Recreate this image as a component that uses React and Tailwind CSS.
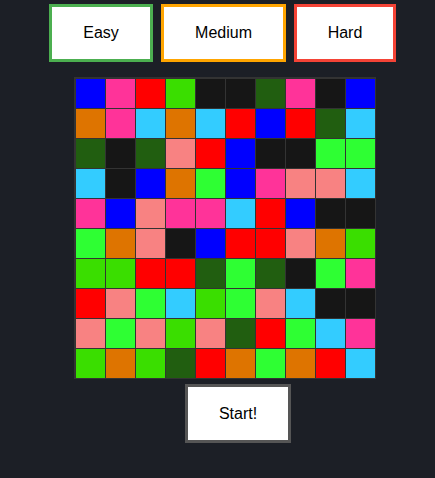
import React, { useState } from 'react';

const COLORS = {
  B: 'bg-[#0000ff]',
  P: 'bg-[#ff3399]',
  R: 'bg-[#ff0000]',
  L: 'bg-[#3ade00]',
  K: 'bg-[#161616]',
  D: 'bg-[#215e10]',
  O: 'bg-[#de7400]',
  C: 'bg-[#33ccff]',
  S: 'bg-[#f88282]',
  G: 'bg-[#2eff33]',
};

const BOARD = [
  'BPRLKKDPKB',
  'OPCOCRBRDC',
  'DKDSRBKKGG',
  'CKBOGBPSSC',
  'PBSPPCRBKK',
  'GOSKBRRSOL',
  'LLRRDGDKGP',
  'RSGCLGSCKK',
  'SGSLSDRGCP',
  'LOLDROGORC',
];

const LEVELS = [
  { name: 'Easy', cls: 'w-[104px] border-[#4caf50]' },
  { name: 'Medium', cls: 'w-[125px] border-[#ffa500]' },
  { name: 'Hard', cls: 'w-[102px] border-[#f44336]' },
];

const App = () => {
  const [level, setLevel] = useState('Easy');

  return (
    <div className="min-h-[478px] w-[435px] bg-[#1c1f26] font-['Liberation_Sans',Arial,sans-serif] text-[16px] text-black">
      {/* difficulty picker */}
      <div className="flex gap-2 pl-[49px] pt-1">
        {LEVELS.map((l) => (
          <button
            key={l.name}
            onClick={() => setLevel(l.name)}
            className={`h-[58px] border-[3px] bg-white ${l.cls}`}
          >
            {l.name}
          </button>
        ))}
      </div>

      {/* board */}
      <div className="ml-[74px] mt-[15px] w-fit border-t-2 border-l-2 border-r border-b border-[#333333] bg-[#333333]">
        <div className="grid grid-cols-10 gap-px">
          {BOARD.map((row, r) =>
            row.split('').map((c, i) => (
              <div key={`${r}-${i}`} className={`h-[29px] w-[29px] ${COLORS[c]}`} />
            ))
          )}
        </div>
      </div>

      <div className="ml-[185px] mt-[5px]">
        <button className="h-[59px] w-[106px] border-[3px] border-[#555555] bg-white">
          Start!
        </button>
      </div>
    </div>
  );
};

export default App;
